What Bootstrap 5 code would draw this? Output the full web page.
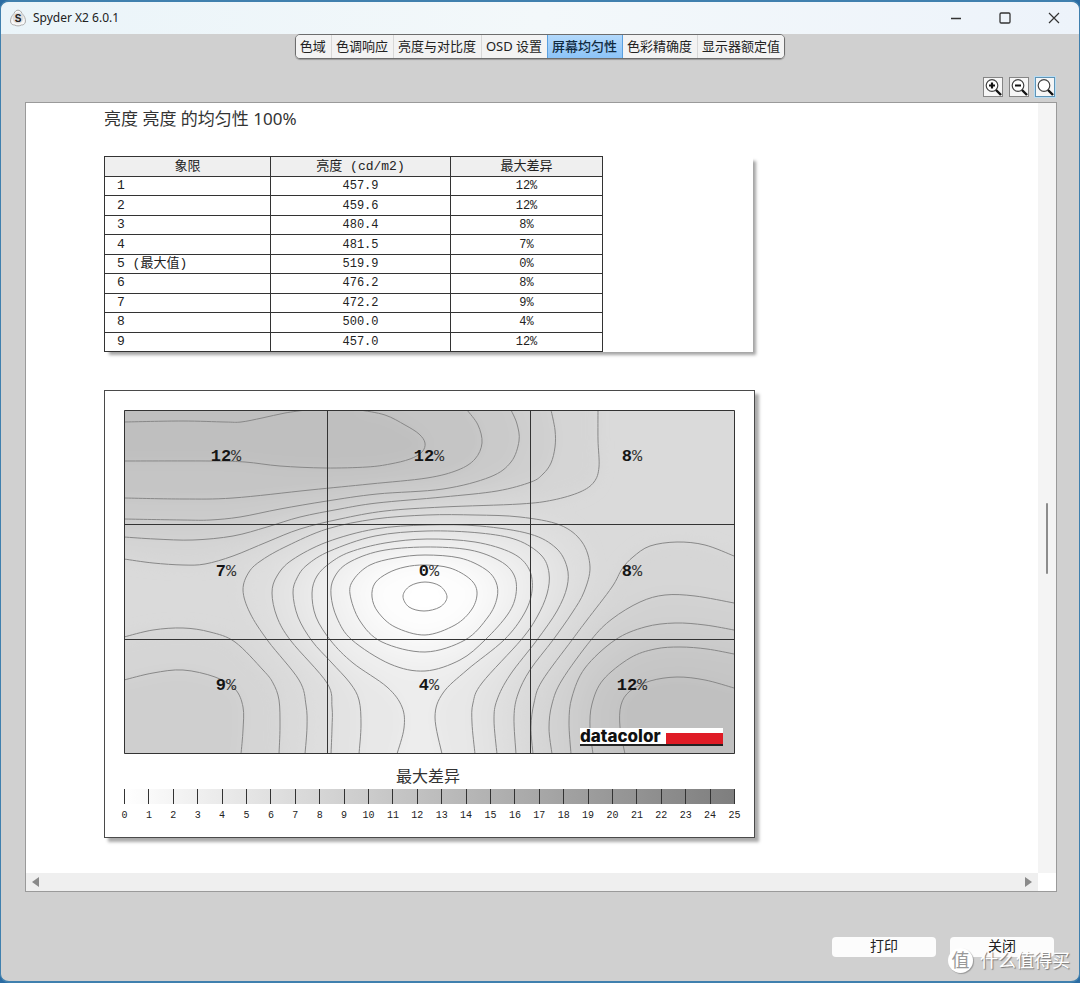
<!DOCTYPE html>
<html lang="zh-CN">
<head>
<meta charset="utf-8">
<meta name="viewport" content="width=device-width, initial-scale=1">
<title>Spyder X2 6.0.1</title>
<link href="https://cdn.jsdelivr.net/npm/bootstrap@5.3.0/dist/css/bootstrap.min.css" rel="stylesheet">
<style>
  body { background: #2b6ca3; font-family: "Noto Sans", "Noto Sans CJK SC", sans-serif; font-size: 13px; color: #222; }
  .app-window { min-height: 100vh; background: #d0d0d0; border: 1px solid #4080ae; border-top-width: 2px; border-bottom-width: 2px; border-radius: 9px; overflow: hidden; }
  .title-bar { height: 32px; padding-right: 1px; background: linear-gradient(90deg, #eaf4f9, #f3f8fa 50%, #edf3fa); font-size: 12px; }
  .title-bar .app-name { color: #222; padding-left: 6px; }
  .win-btn { width: 49px; height: 30px; border: 0; background: none; padding: 0; }
  .tab-strip { border: 1px solid #6d6d6d; border-radius: 5px; overflow: hidden; box-shadow: 0 1px 1px #999; }
  .tab-strip button { height: 23px; border: 0; border-right: 1px solid #d8d8d8; background: #f3f3f3; padding: 0 5px 2px 4px; line-height: 20px; color: #222; white-space: nowrap; }
  .tab-strip button:last-child { border-right: 0; padding-right: 4px; }
  .tab-strip button.active { background: linear-gradient(#b3d9fb, #8dc4f8); border-right-color: #5aa0e0; box-shadow: -1px 0 #5aa0e0; color: #102a40; font-weight: 500; }
  .tool-row { padding: 18px 24px 5px; gap: 6px; }
  .tool-btn { width: 20px; height: 20px; padding: 0; border: 1px solid #858585; background: #f6f6f6; line-height: 0; }
  .tool-btn.focused { border-color: #5f93b5; box-shadow: 0 0 0 1px #b8dcf2; }
  .report-pane { border: 1px solid #9a9a9a; background: #fff; margin: 0 22px 0 24px; }
  .report-body { padding: 3px 0 0 78px; }
  .report-title { font-size: 17px; line-height: 26px; color: #333; margin-bottom: 24px; font-weight: 400; }
  .table-sheet { width: 649px; max-width: 100%; box-shadow: 4px 4px 3px -1px #a4a4a4; margin-bottom: 38px; background: #fff; }
  .uni-table { width: 498px; height: 196px; border-collapse: collapse; table-layout: fixed; color: #222; font: 12px/16px "Liberation Mono", "Noto Sans CJK SC", monospace; }
  .uni-table thead tr { height: 20px; }
  .uni-table tbody tr { height: 19px; }
  .uni-table th, .uni-table td { border: 1px solid #333; padding: 0; text-align: center; vertical-align: middle; line-height: 16px; }
  .uni-table th { background: #efefef; font-weight: 400; font-size: 13px; }
  .uni-table tbody th { background: #fff; text-align: left; padding-left: 12px; }
  .chart-card { width: 651px; max-width: 100%; border: 1px solid #4a4a4a; box-shadow: 4px 4px 3px #aaa; background: #fff; line-height: 0; }
  .chart-card svg { width: 100%; height: auto; }
  .contours path { fill: none; stroke: #888; stroke-width: 1; }
  .quad-lines { stroke: #333; stroke-width: 1; fill: none; }
  .quad-labels { font: bold 17px "Liberation Mono", monospace; text-anchor: middle; fill: #151515; }
  .quad-labels tspan { font-weight: 400; fill: #333; }
  .scale-labels { font: 10px "Liberation Mono", monospace; text-anchor: middle; fill: #222; }
  .scale-title { font: 16px "Noto Sans CJK SC", sans-serif; text-anchor: middle; fill: #333; }
  .logo-name { font: 800 17px Inter, sans-serif; fill: #111; }
  .v-track { width: 18px; background: #f4f4f4; padding-bottom: 299px; }
  .v-thumb { width: 2px; height: 71px; background: #8c8c8c; border-radius: 1px; }
  .h-track { height: 18px; background: #efefef; padding: 0 5px; }
  .scroll-corner { width: 18px; background: #fff; }
  .foot-bar { padding: 45px 25px 24px; gap: 14px; }
  .foot-bar button { width: 104px; height: 20px; border: 0; border-radius: 4px; background: #fcfcfc; padding: 0 0 3px; font-size: 14px; line-height: 17px; color: #222; }
  .site-mark { right: 9px; bottom: 8px; color: #fff; font-size: 18px; line-height: 26px; gap: 7px; text-shadow: 1px 1px 1px #777; pointer-events: none; }
  .site-mark .seal { width: 25px; height: 25px; border-radius: 50%; background: #fff; color: #999; text-shadow: none; line-height: 24px; box-shadow: 1px 1px 1px #999; }
</style>
</head>
<body>
<div class="app-window d-flex flex-column position-relative">
  <header class="title-bar d-flex align-items-center flex-shrink-0">
    <svg class="ms-2" width="18" height="18" viewBox="0 0 18 18" aria-hidden="true">
      <path d="M5 4.500C6 2 7.500 1.200 9 1.200s3 .8 4 3.300c2.500 2.500 3.800 5.500 3.400 8.500-.6 2.400-2.300 3-4 3-2 1.200-4.800 1.200-6.800 0-1.700 0-3.400-.6-4-3C1.200 10 2.500 7 5 4.500z" fill="#f8f8f8" stroke="#aaa"/>
      <circle cx="9" cy="9" r="5.500" fill="#dedede"/>
      <text x="9" y="12.500" text-anchor="middle" font-family="Liberation Sans, sans-serif" font-size="10" font-weight="bold" fill="#222">S</text>
    </svg>
    <span class="app-name">Spyder X2 6.0.1</span>
    <div class="ms-auto d-flex align-self-start">
      <button class="win-btn" aria-label="最小化"><svg width="12" height="12" viewBox="0 0 12 12"><path d="M1 6.500h10" stroke="#333" stroke-width="1.300"/></svg></button>
      <button class="win-btn" aria-label="最大化"><svg width="12" height="12" viewBox="0 0 12 12"><rect x="1" y="1" width="10" height="10" rx="1.200" fill="none" stroke="#333" stroke-width="1.300"/></svg></button>
      <button class="win-btn" aria-label="关闭窗口"><svg width="12" height="12" viewBox="0 0 12 12"><path d="M1 1l10 10M11 1L1 11" stroke="#333" stroke-width="1.200"/></svg></button>
    </div>
  </header>

  <nav class="d-flex justify-content-center flex-shrink-0">
    <div class="tab-strip d-flex" role="tablist">
      <button role="tab">色域</button>
      <button role="tab">色调响应</button>
      <button role="tab">亮度与对比度</button>
      <button role="tab">OSD 设置</button>
      <button role="tab" class="active" aria-selected="true">屏幕均匀性</button>
      <button role="tab">色彩精确度</button>
      <button role="tab">显示器额定值</button>
    </div>
  </nav>

  <div class="tool-row d-flex justify-content-end flex-shrink-0">
    <button class="tool-btn" aria-label="放大"><svg width="18" height="18" viewBox="0 0 18 18"><circle cx="8" cy="7.500" r="5.800" fill="#fff" stroke="#444" stroke-width="1.200"/><path d="M12 12l5 5" stroke="#111" stroke-width="2.400"/><path d="M8 4.500v6M5 7.500h6" stroke="#111" stroke-width="2.200"/></svg></button>
    <button class="tool-btn" aria-label="缩小"><svg width="18" height="18" viewBox="0 0 18 18"><circle cx="8" cy="7.500" r="5.800" fill="#fff" stroke="#444" stroke-width="1.200"/><path d="M12 12l5 5" stroke="#111" stroke-width="2.400"/><path d="M5 7.500h6" stroke="#111" stroke-width="2"/></svg></button>
    <button class="tool-btn focused" aria-label="实际大小"><svg width="18" height="18" viewBox="0 0 18 18"><circle cx="8" cy="7.500" r="5.800" fill="#fff" stroke="#444" stroke-width="1.200"/><path d="M12 12l5 5" stroke="#111" stroke-width="2.400"/></svg></button>
  </div>

  <main class="report-pane d-flex flex-column flex-grow-1">
    <div class="d-flex flex-grow-1">
      <div class="report-body flex-grow-1">
        <h1 class="report-title mt-0">亮度 亮度 的均匀性 100%</h1>
        <div class="table-sheet">
          <table class="uni-table">
            <colgroup><col style="width:166px"><col style="width:180px"><col style="width:152px"></colgroup>
            <thead><tr><th scope="col">象限</th><th scope="col">亮度 (cd/m2)</th><th scope="col">最大差异</th></tr></thead>
            <tbody>
              <tr><th scope="row">1</th><td>457.9</td><td>12%</td></tr>
              <tr><th scope="row">2</th><td>459.6</td><td>12%</td></tr>
              <tr><th scope="row">3</th><td>480.4</td><td>8%</td></tr>
              <tr><th scope="row">4</th><td>481.5</td><td>7%</td></tr>
              <tr><th scope="row">5 (最大值)</th><td>519.9</td><td>0%</td></tr>
              <tr><th scope="row">6</th><td>476.2</td><td>8%</td></tr>
              <tr><th scope="row">7</th><td>472.2</td><td>9%</td></tr>
              <tr><th scope="row">8</th><td>500.0</td><td>4%</td></tr>
              <tr><th scope="row">9</th><td>457.0</td><td>12%</td></tr>
            </tbody>
          </table>
        </div>
        <div class="chart-card">
          <svg viewBox="0 0 649 446" role="img" aria-label="最大差异">
            <defs>
              <clipPath id="plotClip"><rect x="19" y="19" width="611" height="344"/></clipPath>
              <filter id="soften" x="-5%" y="-5%" width="110%" height="110%"><feGaussianBlur stdDeviation="7"/></filter>
              <linearGradient id="ramp"><stop offset="0" stop-color="#fff"/><stop offset="1" stop-color="#7e7e7e"/></linearGradient>
            </defs>
            <g clip-path="url(#plotClip)">
              <rect x="19" y="19" width="611" height="344" fill="#dadada"/>
              <g id="shades" filter="url(#soften)" transform="translate(-105 -391)"></g>
              <g id="lines" class="contours" transform="translate(-105 -391)"></g>
            </g>
            <path class="quad-lines" d="M19.500 19.500h610v343h-610zM222.500 19.500v343M425.500 19.500v343M19.500 133.500h610M19.500 248.500h610"/>
            <g class="quad-labels">
              <text x="121" y="70">12<tspan>%</tspan></text><text x="324" y="70">12<tspan>%</tspan></text><text x="527" y="70">8<tspan>%</tspan></text>
              <text x="121" y="185">7<tspan>%</tspan></text><text x="324" y="185">0<tspan>%</tspan></text><text x="527" y="185">8<tspan>%</tspan></text>
              <text x="121" y="299">9<tspan>%</tspan></text><text x="324" y="299">4<tspan>%</tspan></text><text x="527" y="299">12<tspan>%</tspan></text>
            </g>
            <rect x="475" y="337" width="143" height="18" fill="#fff"/>
            <rect x="561" y="342" width="57" height="11" fill="#df1b25"/>
            <rect x="475" y="353" width="143" height="2" fill="#222"/>
            <text class="logo-name" x="475" y="351">datacolor</text>
            <text class="scale-title" x="323" y="391">最大差异</text>
            <rect x="19" y="398" width="611" height="15" fill="url(#ramp)"/>
            <g id="ticks" stroke="#333"></g>
            <g id="tickLabels" class="scale-labels"></g>
          </svg>
        </div>
      </div>
      <div class="v-track d-flex align-items-end justify-content-center flex-shrink-0"><div class="v-thumb"></div></div>
    </div>
    <div class="d-flex flex-shrink-0">
      <div class="h-track d-flex align-items-center justify-content-between flex-grow-1">
        <svg width="8" height="10" viewBox="0 0 8 10"><path d="M8 0v10L1 5z" fill="#8a8a8a"/></svg>
        <svg width="8" height="10" viewBox="0 0 8 10"><path d="M0 0v10l7-5z" fill="#8a8a8a"/></svg>
      </div>
      <div class="scroll-corner"></div>
    </div>
  </main>

  <footer class="foot-bar d-flex justify-content-end flex-shrink-0">
    <button type="button">打印</button>
    <button type="button">关闭</button>
  </footer>
  <div class="site-mark position-absolute d-flex align-items-center"><span class="seal text-center">值</span><span>什么值得买</span></div>
</div>
<script src="https://cdn.jsdelivr.net/npm/bootstrap@5.3.0/dist/js/bootstrap.bundle.min.js"></script>
<script>
  // Level lines: p = points, c = corner that closes the shaded area, z = closed loop
  const contours = [
    {f:'#d5d5d5',c:[124,410],p:[598,410,598,440,599,467,594,482,580,492,553,500,520,504,443,507,385,511,340,519,300,529,267,542,233,556,205,564,183,565,153,563,124,559]},
    {f:'#cfcfcf',c:[124,410],p:[551,410,555,430,555,447,551,463,543,474,531,482,497,491,443,497,377,503,340,509,300,517,267,527,233,536,193,540,155,539,124,537]},
    {f:'#cacaca',c:[124,410],p:[511,410,517,424,519,441,511,462,490,477,443,489,377,494,327,501,280,509,240,517,210,520,183,520,124,519]},
    {f:'#c5c5c5',c:[124,410],p:[467,410,478,425,482,443,475,459,458,470,427,478,370,484,310,490,233,498,183,499,124,498]},
    {f:'#bfbfbf',p:[360,410,385,415,405,425,419,434,425,443,422,452,410,459,390,464,367,467,325,468,280,466,245,462,210,461,124,461]},
    {p:[124,422,182,421,225,422,241,422,262,418,285,413,306,410]},
    {f:'#dedede',p:[305,754,307,727,306,705,299,680,268,641,250,613,243,590,249,572,262,560,287,546,327,529,375,519,427,515,475,515,520,517,560,525,582,542,590,567,584,592,572,613,553,640,530,670,518,694,514,717,516,754]},
    {f:'#e3e3e3',p:[331,754,332,728,332,707,327,683,291,641,277,617,272,593,277,576,292,560,327,542,375,529,427,525,480,526,530,534,556,548,567,567,567,587,557,611,537,640,510,675,497,700,494,720,497,754]},
    {f:'#e8e8e8',p:[359,754,361,725,359,700,350,683,331,662,312,641,298,617,293,593,297,578,307,565,330,551,375,536,427,531,480,533,517,540,541,555,549,573,547,594,537,617,521,640,482,683,473,703,472,723,475,754]},
    {f:'#ededed',p:[397,754,404,728,402,707,387,687,353,663,331,641,316,617,312,593,317,576,330,563,350,552,385,543,427,539,475,542,512,553,529,569,532,591,524,614,504,640,467,670,443,693,435,717,442,754]},
    {f:'#f2f2f2',z:1,p:[331,595,334,578,348,563,380,551,425,547,470,550,500,561,514,575,516,594,508,614,485,640,460,660,425,671,390,664,352,640,337,618]},
    {f:'#f8f8f8',z:1,p:[350,594,354,579,370,565,395,558,425,555,460,558,485,569,496,582,497,598,488,617,465,640,425,652,382,642,360,621]},
    {f:'#fdfdfd',z:1,p:[372,597,375,583,388,573,405,567,425,565,450,568,470,579,477,592,472,609,455,625,425,635,395,627,378,612]},
    {f:'#fff',z:1,p:[403,596,410,586,425,582,440,586,447,597,440,607,424,611,409,607]},
    {f:'#d5d5d5',c:[124,754],p:[279,754,280,727,279,700,273,683,263,670,235,642,210,632,183,628,153,630,124,637]},
    {f:'#cfcfcf',c:[124,754],p:[241,754,243,730,243,707,235,689,215,677,183,670,153,673,124,680]},
    {f:'#d6d6d6',c:[734,754],p:[533,754,531,727,534,703,542,681,572,640,587,620,612,587,622,569,633,557,650,546,677,542,705,545,734,556]},
    {f:'#d1d1d1',c:[734,754],p:[552,754,549,728,552,704,562,680,591,640,612,619,640,602,665,595,695,596,734,603]},
    {f:'#cccccc',c:[734,754],p:[571,754,569,722,572,697,585,668,615,640,645,627,675,623,705,625,734,630]},
    {f:'#c6c6c6',c:[734,754],p:[593,754,590,728,592,704,603,680,630,658,655,649,680,647,707,649,734,654]},
    {f:'#c0c0c0',c:[734,754],p:[625,754,620,727,621,705,630,691,650,681,677,677,705,680,734,688]}
  ];
  function smooth(p, closed) {
    const n = p.length / 2;
    const at = i => { i = closed ? (i + n) % n : Math.max(0, Math.min(n - 1, i)); return [p[2 * i], p[2 * i + 1]]; };
    let d = 'M' + at(0);
    for (let i = 0; i < (closed ? n : n - 1); i++) {
      const [a, b, c, e] = [at(i - 1), at(i), at(i + 1), at(i + 2)];
      d += 'C' + [b[0] + (c[0] - a[0]) / 6, b[1] + (c[1] - a[1]) / 6, c[0] - (e[0] - b[0]) / 6, c[1] - (e[1] - b[1]) / 6, c[0], c[1]].join(' ');
    }
    return d;
  }
  let shades = '', lines = '', ticks = '', labels = '';
  // Extends a shaded area past the frame so that the softened edge stays inside
  const push = c => [c[0] < 400 ? 90 : 770, c[1] < 500 ? 380 : 790];
  for (const k of contours) {
    const d = smooth(k.p, k.z);
    lines += `<path d="${d}"/>`;
    if (!k.f) continue;
    const m = k.p.length, s = [k.p[0], k.p[1]], e = [k.p[m - 2], k.p[m - 1]];
    let tail = '';
    if (k.c) { const q = push(k.c); tail = `L${q[0]} ${e[1]}L${q}L${s[0]} ${q[1]}`; }
    else if (!k.z) { tail = e[1] > 700 ? `V790H${s[0]}` : `H90V380H${s[0]}`; }
    shades += `<path d="${d}${tail}Z" fill="${k.f}"/>`;
  }
  for (let i = 0; i <= 25; i++) {
    const x = 19.5 + i * 24.4;
    ticks += `<path d="M${Math.floor(x) + 0.5} 398v15"/>`;
    labels += `<text x="${x}" y="427">${i}</text>`;
  }
  document.getElementById('shades').innerHTML = shades;
  document.getElementById('lines').innerHTML = lines;
  document.getElementById('ticks').innerHTML = ticks;
  document.getElementById('tickLabels').innerHTML = labels;
</script>
</body>
</html>
